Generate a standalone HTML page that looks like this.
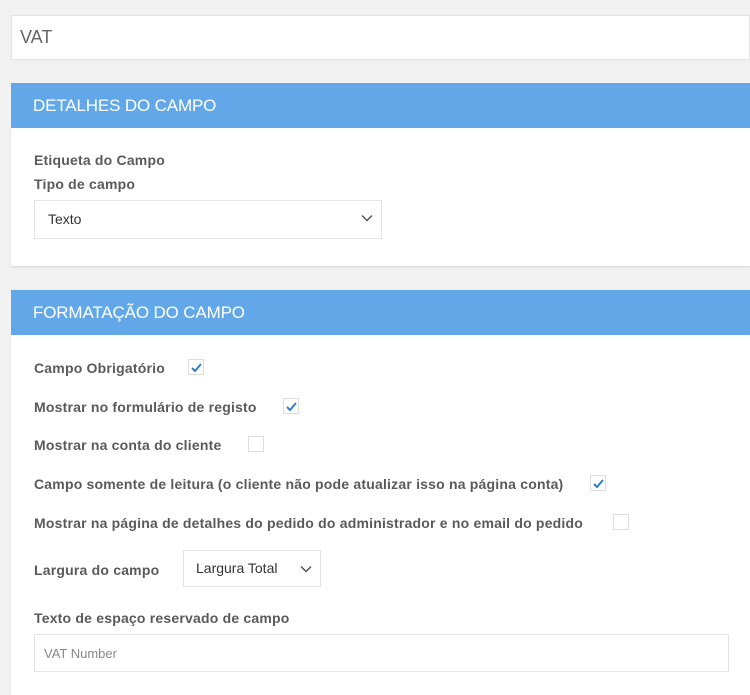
<!DOCTYPE html>
<html><head><meta charset="utf-8"><style>
*{box-sizing:border-box;margin:0;padding:0}
body{width:750px;height:688px;background:#f1f1f1;font-family:"Liberation Sans",Arial,sans-serif;position:relative;overflow:hidden}
.a{position:absolute}
.box{background:#fff;border:1px solid #e3e3e3}
.hdr{position:absolute;left:11px;width:739px;height:45px;background:#62a8e8;color:#fff;font-size:17px;line-height:45px;padding-left:22px;letter-spacing:-0.15px}
.card{position:absolute;left:11px;width:739px;background:#fff;box-shadow:0 1px 2px rgba(0,0,0,.12)}
.lbl{position:absolute;font-size:14px;font-weight:bold;color:#5a5a5a;white-space:nowrap;letter-spacing:0.2px}
.cb{position:absolute;width:16px;height:16px;border:1px solid #ddd;background:#fff}
.cb svg{position:absolute;left:1px;top:1px}
.chev{position:absolute}
</style></head><body>
<div class="a box" style="left:11px;top:15px;width:739px;height:45px"></div>
<div class="a" style="left:20px;top:27px;font-size:18px;color:#666">VAT</div>

<div class="hdr" style="top:83px">DETALHES DO CAMPO</div>
<div class="card" style="top:128px;height:138px"></div>
<div class="lbl" style="left:34px;top:152px">Etiqueta do Campo</div>
<div class="lbl" style="left:34px;top:176px">Tipo de campo</div>
<div class="a box" style="left:34px;top:200px;width:348px;height:39px"></div>
<div class="a" style="left:48px;top:211px;font-size:14px;color:#333">Texto</div>
<svg class="chev" style="left:361px;top:214px" width="12" height="8"><path d="M1 1.5L6 6.5L11 1.5" fill="none" stroke="#555" stroke-width="1.5"/></svg>

<div class="hdr" style="top:290px">FORMATAÇÃO DO CAMPO</div>
<div class="card" style="top:335px;height:360px"></div>

<div class="lbl" style="left:34px;top:360px">Campo Obrigatório</div>
<div class="cb" style="left:188px;top:359px"><svg width="13" height="13"><path d="M2 7L5 10L11 3" fill="none" stroke="#2f7fd0" stroke-width="2"/></svg></div>
<div class="lbl" style="left:34px;top:399px">Mostrar no formulário de registo</div>
<div class="cb" style="left:283px;top:398px"><svg width="13" height="13"><path d="M2 7L5 10L11 3" fill="none" stroke="#2f7fd0" stroke-width="2"/></svg></div>
<div class="lbl" style="left:34px;top:437px">Mostrar na conta do cliente</div>
<div class="cb" style="left:248px;top:436px"></div>
<div class="lbl" style="left:34px;top:476px">Campo somente de leitura (o cliente não pode atualizar isso na página conta)</div>
<div class="cb" style="left:590px;top:475px"><svg width="13" height="13"><path d="M2 7L5 10L11 3" fill="none" stroke="#2f7fd0" stroke-width="2"/></svg></div>
<div class="lbl" style="left:34px;top:515px">Mostrar na página de detalhes do pedido do administrador e no email do pedido</div>
<div class="cb" style="left:613px;top:514px"></div>

<div class="lbl" style="left:34px;top:562px">Largura do campo</div>
<div class="a box" style="left:183px;top:550px;width:138px;height:37px"></div>
<div class="a" style="left:196px;top:560px;font-size:14px;color:#333">Largura Total</div>
<svg class="chev" style="left:300px;top:565px" width="12" height="8"><path d="M1 1.5L6 6.5L11 1.5" fill="none" stroke="#555" stroke-width="1.5"/></svg>

<div class="lbl" style="left:34px;top:610px">Texto de espaço reservado de campo</div>
<div class="a box" style="left:34px;top:634px;width:695px;height:38px"></div>
<div class="a" style="left:44px;top:646px;font-size:13px;color:#888">VAT Number</div>
</body></html>
